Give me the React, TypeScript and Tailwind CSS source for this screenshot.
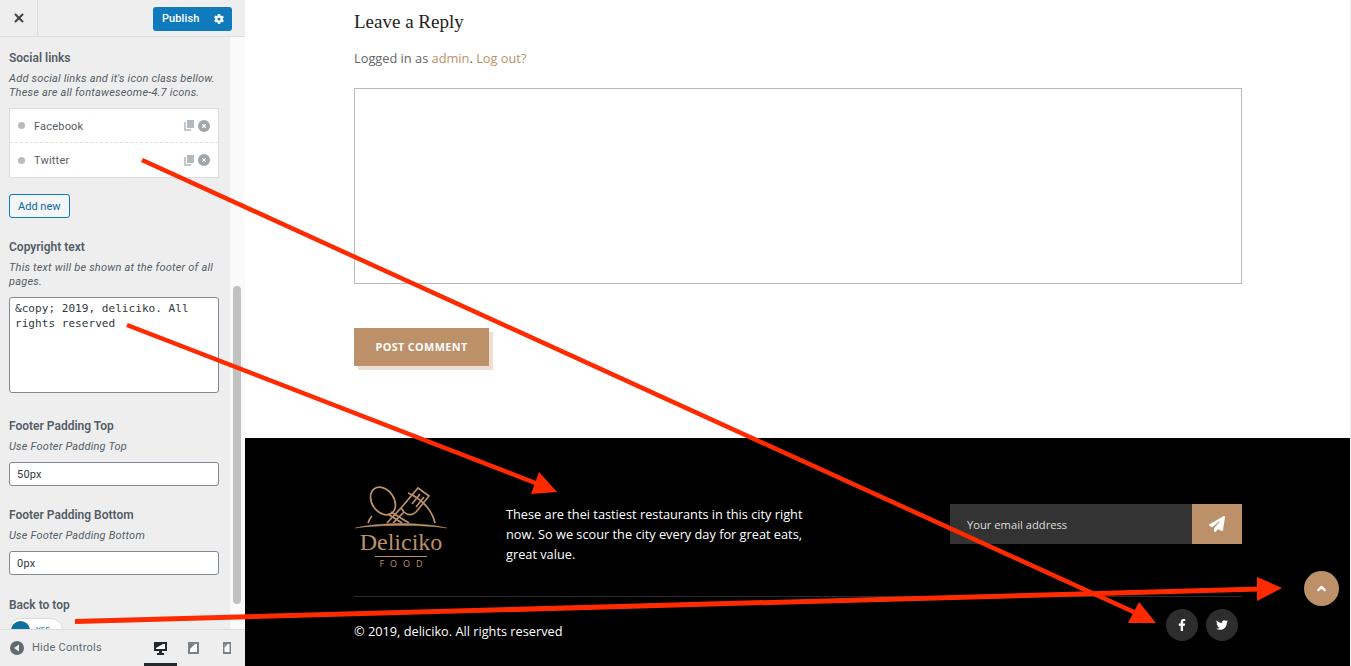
import { ChevronUp, X } from "lucide-react";
import { FaFacebookF, FaTwitter } from "react-icons/fa";
import { FaCircleXmark, FaGear, FaPaperPlane } from "react-icons/fa6";

const SectionTitle = ({ children }: { children: React.ReactNode }) => (
  <h3 className="text-[12px] leading-[16px] font-semibold text-[#555d66]">{children}</h3>
);

const Hint = ({ children }: { children: React.ReactNode }) => (
  <p className="text-[11px] leading-[14px] italic text-[#555d66] tracking-[0.2px]">{children}</p>
);

const CopyIcon = () => (
  <svg width="10" height="11" viewBox="0 0 10 11" className="ml-auto">
    <path d="M0 2h2v7h5v2H0z" fill="#c4c7ca" />
    <path d="M3 0h7v8H3z" fill="#b4b9be" />
  </svg>
);

const LinkRow = ({ label, dashed }: { label: string; dashed?: boolean }) => (
  <div className={`flex items-center h-[34px] pl-[8px] pr-[8px] ${dashed ? "border-b border-dashed border-[#ddd]" : ""}`}>
    <span className="w-[7px] h-[7px] rounded-full bg-[#bbb] mr-[9px]" />
    <span className={`${dashed ? "mt-[4px]" : "mt-[2px]"} text-[11px] text-[#555d66] tracking-[0.2px]`}>{label}</span>
    <CopyIcon />
    <FaCircleXmark size={12} className="ml-[4px] text-[#a0a5aa]" />
  </div>
);

const Field = ({ title, hint, value }: { title: string; hint: string; value: string }) => (
  <div>
    <SectionTitle>{title}</SectionTitle>
    <div className="mt-[6px]"><Hint>{hint}</Hint></div>
    <div className="mt-[8px] h-[24px] bg-white border border-[#7e8993] rounded-[3px] px-[7px] text-[11px] leading-[24px] tracking-[0.2px] text-[#32373c] font-['Roboto',sans-serif]">{value}</div>
  </div>
);

const DeviceTab = ({ active, children }: { active?: boolean; children: React.ReactNode }) => (
  <div className="relative w-[33px] h-full flex items-center justify-center">
    {children}
    {active && <span className="absolute left-0 bottom-0 w-[33px] h-[3px] bg-[#23282d]" />}
  </div>
);

const Sidebar = () => (
  <aside className="w-[245px] h-full shrink-0 flex flex-col bg-[#eee] font-['Roboto',sans-serif]">
    <div className="h-[37px] shrink-0 flex items-center border-b border-[#ddd] pr-[13px]">
      <div className="w-[38px] h-full flex items-center justify-center border-r border-[#ddd]">
        <X size={14} strokeWidth={3.5} className="text-[#444]" />
      </div>
      <div className="ml-auto mt-[2px] flex items-center h-[24px] w-[79px] rounded-[3px] bg-[#0f7bbd] text-white text-[11px]">
        <span className="pl-[9px] font-medium tracking-[0.1px]">Publish</span>
        <FaGear size={10} className="ml-auto mr-[8px]" />
      </div>
    </div>

    <div className="flex-1 flex min-h-0">
      <div className="flex-1 overflow-hidden pl-[9px] pr-[11px] pt-[13px]">
        <SectionTitle>Social links</SectionTitle>
        <div className="mt-[6px]">
          <Hint>Add social links and it's icon class bellow.<br />These are all fontaweseome-4.7 icons.</Hint>
        </div>
        <div className="mt-[8px] bg-white border border-[#ddd]">
          <LinkRow label="Facebook" dashed />
          <LinkRow label="Twitter" />
        </div>
        <button className="mt-[16px] h-[24px] px-[8px] pt-[3px] border border-[#0f7bbd] rounded-[3px] bg-[#f3f5f6] text-[11px] text-[#0f6a9e]">Add new</button>

        <div className="mt-[21px]">
          <SectionTitle>Copyright text</SectionTitle>
          <div className="mt-[6px]"><Hint>This text will be shown at the footer of all pages.</Hint></div>
          <div className="mt-[8px] h-[96px] bg-white border border-[#7e8993] rounded-[3px] px-[5px] py-[3px] text-[11.1px] leading-[15px] text-[#32373c] font-['DejaVu_Sans_Mono',monospace]">
            &amp;copy; 2019, deliciko. All rights reserved
          </div>
        </div>

        <div className="mt-[25px]">
          <Field title="Footer Padding Top" hint="Use Footer Padding Top" value="50px" />
        </div>
        <div className="mt-[21px]">
          <Field title="Footer Padding Bottom" hint="Use Footer Padding Bottom" value="0px" />
        </div>

        <div className="mt-[22px]">
          <SectionTitle>Back to top</SectionTitle>
          <div className="mt-[5px] w-[54px] h-[24px] rounded-full bg-white border border-[#ddd] flex items-center pl-[1px]">
            <span className="w-[19px] h-[19px] rounded-full bg-[#0f6f9f]" />
            <span className="ml-[6px] text-[8px] text-[#0f7bbd]">YES</span>
          </div>
        </div>
      </div>
      <div className="w-[15px] shrink-0 bg-[#fafafa] pt-[249px] px-[3px]">
        <div className="h-[318px] w-[8px] rounded-full bg-[#c1c1c1]" />
      </div>
    </div>

    <div className="h-[37px] shrink-0 flex items-center border-t border-[#ddd] pl-[10px] pr-[2px]">
      <svg width="14" height="14" viewBox="0 0 14 14">
        <circle cx="7" cy="7" r="7" fill="#606a73" />
        <path d="M4 7l5-3.5v7z" fill="#eee" />
      </svg>
      <span className="ml-[8px] text-[11px] text-[#606a73] tracking-[0.25px]">Hide Controls</span>
      <div className="ml-auto h-full flex">
        <DeviceTab active>
          <svg width="13" height="13" viewBox="0 0 13 13">
            <path d="M0 0h13v9H0z" fill="#23282d" />
            <path d="M2 2h9v5H2z" fill="#fff" />
            <path d="M2 2h7L2 6z" fill="#23282d" />
            <path d="M5 9h3v2h2v2H3v-2h2z" fill="#23282d" />
          </svg>
        </DeviceTab>
        <DeviceTab>
          <svg width="11" height="12" viewBox="0 0 11 12">
            <path d="M0 0h11v12H0z" fill="#7a8087" />
            <path d="M2 2h7v8H2z" fill="#fff" />
            <path d="M2 2h5L2 7z" fill="#7a8087" />
          </svg>
        </DeviceTab>
        <DeviceTab>
          <svg width="8" height="12" viewBox="0 0 8 12">
            <path d="M0 0h8v12H0z" fill="#7a8087" />
            <path d="M1.5 2h5v8h-5z" fill="#fff" />
            <path d="M1.5 2h3l-3 4z" fill="#7a8087" />
          </svg>
        </DeviceTab>
      </div>
    </div>
  </aside>
);

const Logo = () => (
  <div className="w-[94px] flex flex-col items-center">
    <svg width="94" height="43" viewBox="0 0 94 43" fill="none" stroke="#bc9169" strokeWidth="1.7">
      <path d="M1 42 C 25 36, 69 36, 93 42 C 69 38.5, 25 38.5, 1 42 Z" fill="#bc9169" strokeWidth="0.4" />
      <ellipse cx="29" cy="15" rx="11" ry="15" transform="rotate(-35 29 15)" />
      <path d="M37 26 L55 37 M34 28 L48 37" />
      <path d="M64 2 L75 10 L62 26 C 58 30, 53 29, 50 26 L47 22 Z" />
      <path d="M66 8 L58 18 M70 11 L62 21" />
      <path d="M50 26 L39 37 M47 22 L33 37" />
      <path d="M54 7 C 68 13, 78 24, 81 37 M14 37 C 15 34, 16 32, 18 30" />
    </svg>
    <div className="mt-[1px] text-[24px] leading-[25px] text-[#bc9169] font-['Liberation_Serif',serif]">Deliciko</div>
    <div className="w-[52px] border-t border-[#bc9169] mt-[1px]" />
    <div className="mt-[1px] text-[9px] leading-[11px] tracking-[6px] pl-[6px] text-[#bc9169] font-['Open_Sans',sans-serif]">FOOD</div>
  </div>
);

const Footer = () => (
  <footer className="h-[228px] shrink-0 bg-black pl-[109px] pr-[108px] font-['Open_Sans',sans-serif]">
    <div className="h-[159px] border-b border-[#2a2a2a] pt-[48px] flex items-start">
      <Logo />
      <p className="ml-[58px] mt-[18px] w-[310px] text-[12.75px] leading-[20px] text-white">
        These are thei tastiest restaurants in this city right now. So we scour the city every day for great eats, great value.
      </p>
      <div className="ml-auto mt-[18px] w-[292px] h-[40px] flex bg-[#333]">
        <span className="flex-1 pl-[17px] text-[11.2px] leading-[41px] text-[#ddd]">Your email address</span>
        <span className="w-[50px] bg-[#bc9169] flex items-center justify-center">
          <FaPaperPlane size={16} className="text-white" />
        </span>
      </div>
    </div>
    <div className="flex items-start pt-[12px]">
      <span className="mt-[12px] text-[12.75px] leading-[20px] text-white">© 2019, deliciko. All rights reserved</span>
      <div className="ml-auto mr-[4px] flex gap-[8px]">
        <span className="w-[32px] h-[32px] rounded-full bg-[#2d2d2d] flex items-center justify-center"><FaFacebookF size={12} className="text-white" /></span>
        <span className="w-[32px] h-[32px] rounded-full bg-[#2d2d2d] flex items-center justify-center"><FaTwitter size={12} className="text-white" /></span>
      </div>
    </div>
  </footer>
);

const Main = () => (
  <main className="flex-1 min-w-0 flex flex-col bg-white border-r border-[#eee]">
    <div className="flex-1 pl-[109px] pr-[108px] pt-[11px] font-['Open_Sans',sans-serif]">
      <h2 className="text-[19px] leading-[22px] text-[#222] font-['Liberation_Serif',serif]">Leave a Reply</h2>
      <p className="mt-[15px] text-[12.8px] leading-[20px] text-[#666]">
        Logged in as <span className="text-[#bc9169]">admin</span>. <span className="text-[#bc9169]">Log out?</span>
      </p>
      <div className="mt-[20px] h-[196px] border border-[#bbb]" />
      <div className="mt-[44px] relative w-[135px] h-[38px]">
        <div className="absolute left-[4px] top-[4px] w-[135px] h-[38px] bg-[#efdfd3]" />
        <div className="relative w-[135px] h-[38px] bg-[#bc9169] text-white text-[10.8px] font-bold tracking-[0.4px] flex items-center justify-center">POST COMMENT</div>
      </div>
    </div>
    <Footer />
  </main>
);

// the red annotation arrows drawn over the screenshot
const Arrows = () => (
  <svg className="absolute inset-0 pointer-events-none" width="1351" height="666" viewBox="0 0 1351 666" fill="#ff2a00" stroke="#ff2a00">
    <line x1="142" y1="160" x2="1136" y2="613" strokeWidth="4.5" />
    <path d="M1156 623 L1139 602 L1128 623 Z" stroke="none" />
    <line x1="127" y1="325" x2="538" y2="484" strokeWidth="4.5" />
    <path d="M557 492 L539 472 L531 494 Z" stroke="none" />
    <line x1="75" y1="621.5" x2="1260" y2="589" strokeWidth="5" />
    <path d="M1282 588 L1257 577 L1257 601 Z" stroke="none" />
  </svg>
);

export default function App() {
  return (
    <div className="relative w-[1351px] h-[666px] overflow-hidden flex bg-white">
      <Sidebar />
      <Main />
      <a className="absolute left-[1304px] top-[571px] w-[35px] h-[35px] rounded-full bg-[#bc9169] flex items-center justify-center">
        <ChevronUp size={13} strokeWidth={4} className="text-white" />
      </a>
      <Arrows />
    </div>
  );
}
